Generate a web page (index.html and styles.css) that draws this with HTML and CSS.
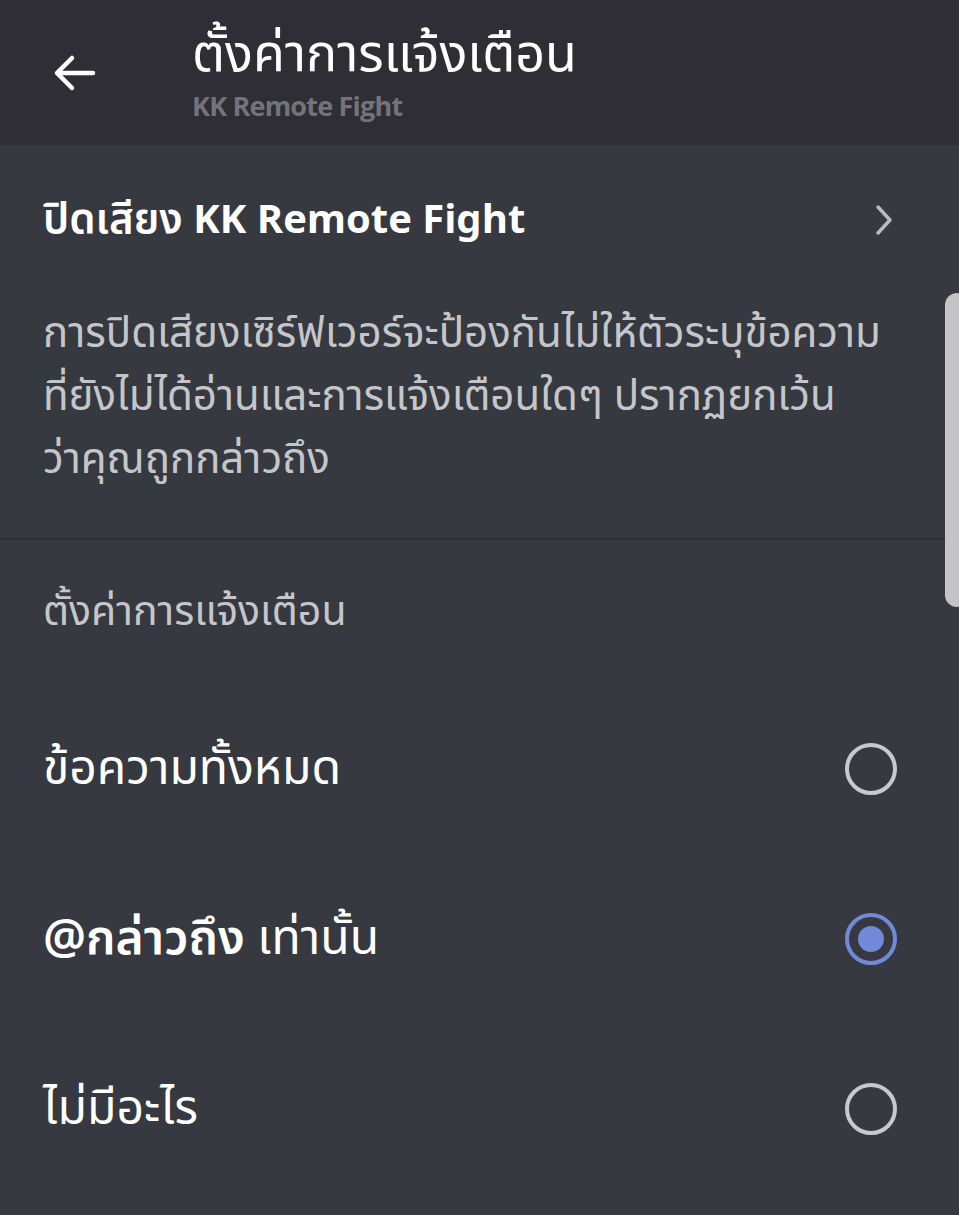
FILE: index.html
```html
<!DOCTYPE html>
<html lang="th">
<head>
<meta charset="utf-8">
<link rel="stylesheet" href="styles.css">
</head>
<body>
<div class="app">
  <header class="topbar">
    <div class="back">
      <svg width="44" height="40" viewBox="0 0 44 40"><path d="M41 20 H6 M20 5 L5 20 L20 35" fill="none" stroke="#fff" stroke-width="4.5" stroke-linecap="round" stroke-linejoin="round"/></svg>
    </div>
    <div class="titles">
      <div class="title">ตั้งค่าการแจ้งเตือน</div>
      <div class="subtitle">KK Remote Fight</div>
    </div>
  </header>
  <main class="content">
    <div class="mute-row">
      <span class="mute-label"><span class="th">ปิดเสียง</span> KK Remote Fight</span>
      <svg class="chev" width="18" height="32" viewBox="0 0 18 32"><path d="M3 3 L15 16 L3 29" fill="none" stroke="#b9bbbe" stroke-width="3.5" stroke-linecap="round" stroke-linejoin="round"/></svg>
    </div>
    <p class="desc">การปิดเสียงเซิร์ฟเวอร์จะป้องกันไม่ให้ตัวระบุข้อความ<br>ที่ยังไม่ได้อ่านและการแจ้งเตือนใดๆ ปรากฏยกเว้น<br>ว่าคุณถูกกล่าวถึง</p>
    <div class="section-title">ตั้งค่าการแจ้งเตือน</div>
    <div class="option">
      <span class="opt-label">ข้อความทั้งหมด</span>
      <span class="radio"></span>
    </div>
    <div class="option">
      <span class="opt-label"><b>@กล่าวถึง</b> เท่านั้น</span>
      <span class="radio checked"></span>
    </div>
    <div class="option">
      <span class="opt-label">ไม่มีอะไร</span>
      <span class="radio"></span>
    </div>
  </main>
  <div class="scrollbar"></div>
</div>
</body>
</html>
```
FILE: styles.css
```css
html, body {
  margin: 0;
  padding: 0;
  background: #36393f;
}
body {
  font-family: "Noto Sans Thai", "Noto Sans", "DejaVu Sans", sans-serif;
  color: #ffffff;
}
.app {
  position: relative;
  width: 959px;
  height: 1215px;
  overflow: hidden;
  background: #36393f;
}
.topbar {
  height: 145px;
  background: #2e2e34;
  display: flex;
  align-items: flex-start;
  box-sizing: border-box;
  padding-left: 52px;
}
.back {
  width: 44px;
  height: 40px;
  margin-top: 53px;
}
.titles {
  margin-left: 96px;
  margin-top: 22px;
}
.title {
  font-size: 52px;
  line-height: 66px;
  font-weight: 400;
  color: #ffffff;
  white-space: nowrap;
}
.subtitle {
  font-size: 27px;
  line-height: 36px;
  font-weight: 700;
  color: #73747b;
  font-family: "Open Sans", "Noto Sans", sans-serif;
  letter-spacing: -0.8px;
}
.content {
  padding: 0 62px 0 43px;
}
.mute-row {
  height: 150px;
  display: flex;
  align-items: center;
  justify-content: space-between;
  padding-right: 4px;
}
.mute-label {
  font-size: 40px;
  font-weight: 700;
  white-space: nowrap;
}
.mute-label .th {
  font-size: 42px;
  font-weight: 600;
}
.desc {
  margin: 0 -62px 0 -43px;
  padding: 8px 20px 46px 43px;
  font-size: 42px;
  line-height: 63px;
  color: #c5c6ca;
  white-space: nowrap;
  border-bottom: 2px solid #303238;
}
.section-title {
  height: 144px;
  display: flex;
  align-items: center;
  font-size: 41px;
  color: #c5c6ca;
}
.option {
  height: 170px;
  display: flex;
  align-items: center;
  justify-content: space-between;
}
.opt-label {
  font-size: 48px;
  font-weight: 400;
  white-space: nowrap;
}
.opt-label b {
  font-weight: 600;
}
.radio {
  width: 44px;
  height: 44px;
  border: 4px solid #c8c9cd;
  border-radius: 50%;
  box-sizing: content-box;
  position: relative;
}
.radio.checked {
  border-color: #7289da;
}
.radio.checked::after {
  content: "";
  position: absolute;
  left: 9px;
  top: 9px;
  width: 26px;
  height: 26px;
  border-radius: 50%;
  background: #7289da;
}
.scrollbar {
  position: absolute;
  left: 945px;
  top: 293px;
  width: 24px;
  height: 314px;
  border-radius: 12px;
  background: #c4c4c7;
}
```
